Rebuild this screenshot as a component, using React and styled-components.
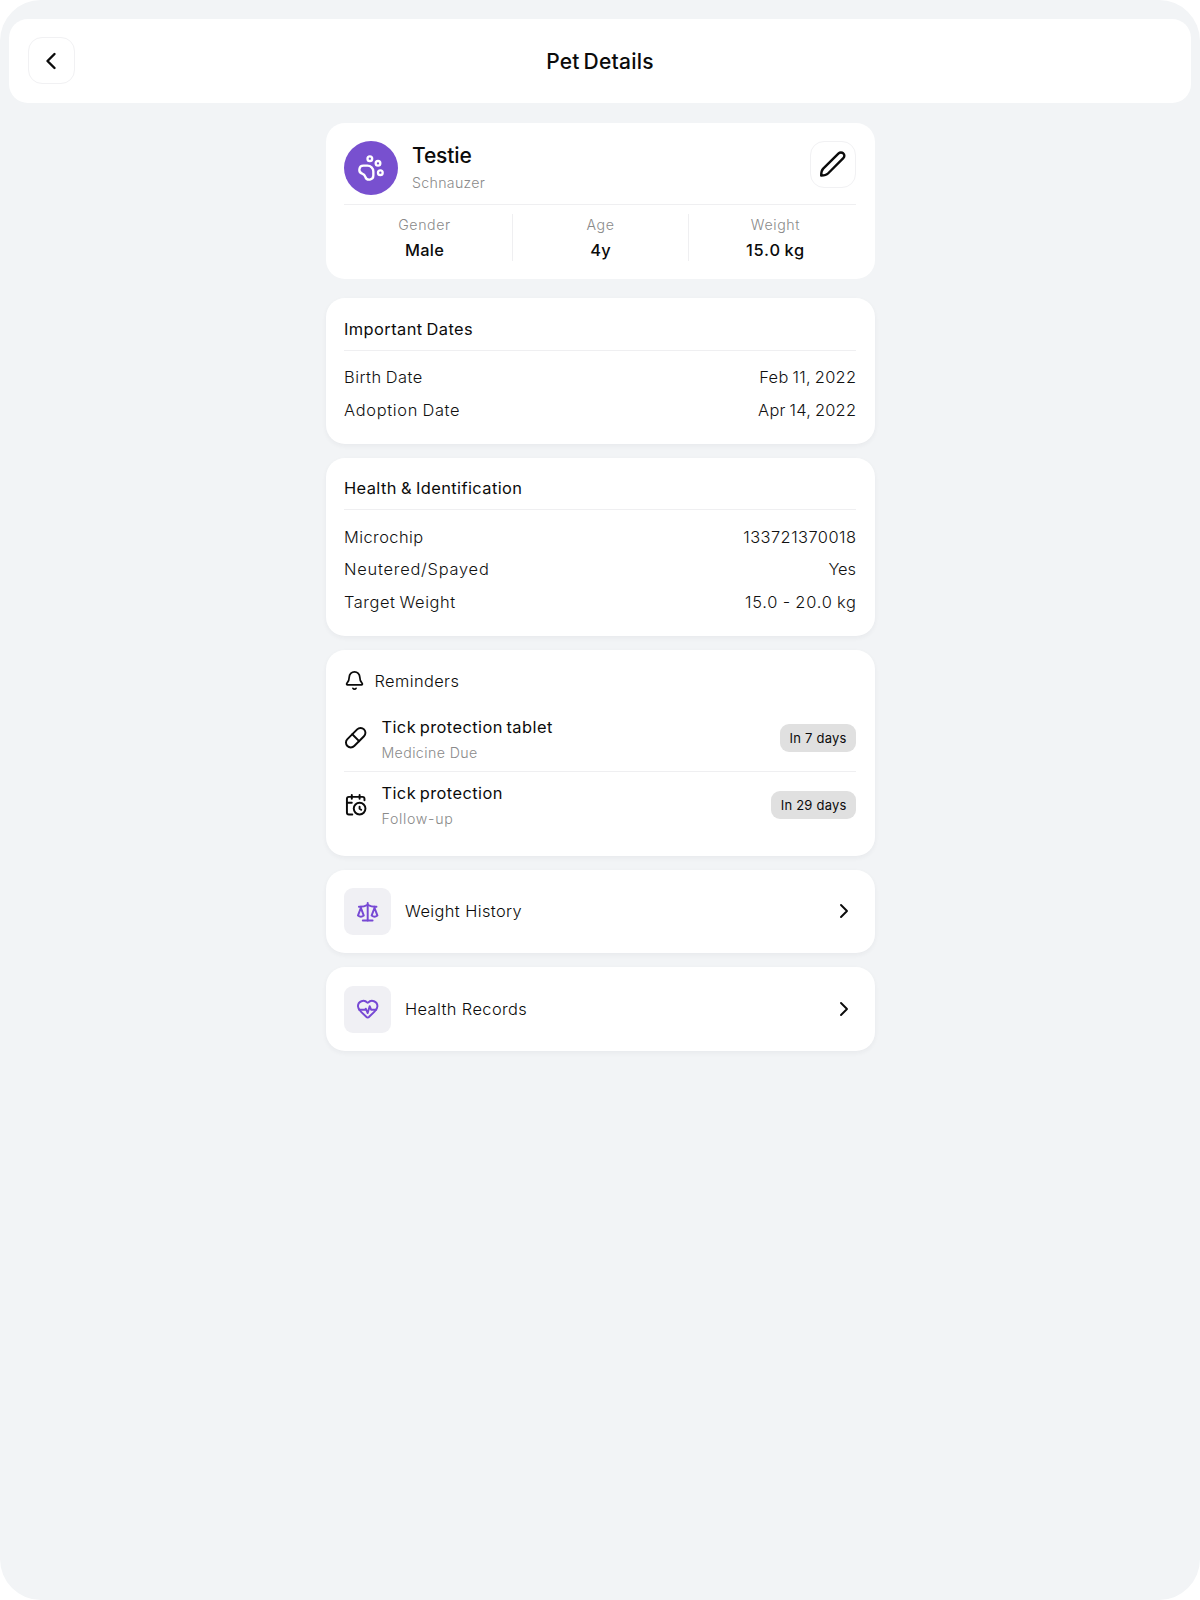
import React from 'react';
import styled, { createGlobalStyle } from 'styled-components';
import {
  Bell,
  CalendarClock,
  ChevronLeft,
  ChevronRight,
  HeartPulse,
  PawPrint,
  Pill,
  Scale
} from 'lucide-react';

// track = letter spacing in px
const stats = [
  { label: 'Gender', value: 'Male', track: 0.25 },
  { label: 'Age', value: '4y', track: 0.2 },
  { label: 'Weight', value: '15.0 kg', track: 0.8 }
];

const dates = [
  { label: 'Birth Date', track: 0.5, value: 'Feb 11, 2022', valueTrack: 0.3 },
  { label: 'Adoption Date', track: 0.7, value: 'Apr 14, 2022', valueTrack: 0.25 }
];

const health = [
  { label: 'Microchip', track: 0.45, value: '133721370018', valueTrack: 0.47 },
  { label: 'Neutered/Spayed', track: 0.78, value: 'Yes', valueTrack: 0 },
  { label: 'Target Weight', track: 0.55, value: '15.0 - 20.0 kg', valueTrack: 0.8 }
];

const reminders = [
  { icon: Pill, title: 'Tick protection tablet', type: 'Medicine Due', track: 0.4, due: 'In 7 days' },
  { icon: CalendarClock, title: 'Tick protection', type: 'Follow-up', track: 0.7, due: 'In 29 days' }
];

const links = [
  { icon: Scale, title: 'Weight History' },
  { icon: HeartPulse, title: 'Health Records' }
];

const PenIcon = () => (
  <svg width="28" height="28" viewBox="0 0 28 28" fill="none" stroke="#0b0b0b" strokeWidth="2.4" strokeLinecap="round" strokeLinejoin="round">
    <path d="M4.2 18.7 L19.6 3.4 C20.9 2.1 23 2.1 24.3 3.4 C25.7 4.7 25.7 6.9 24.3 8.2 L9 23.5 C7.2 25.3 4.8 25.5 2.2 25.6 C2.2 23.1 2.4 20.5 4.2 18.7 Z" />
  </svg>
);

const InfoCard = ({ title, rows }) => (
  <Card $shadow>
    <CardTitle>{title}</CardTitle>
    <InfoRows>
      {rows.map(row => (
        <InfoRow key={row.label}>
          <InfoText $track={row.track}>{row.label}</InfoText>
          <InfoText $track={row.valueTrack}>{row.value}</InfoText>
        </InfoRow>
      ))}
    </InfoRows>
  </Card>
);

const App = () => (
  <Page>
    <GlobalStyle />
    <Screen>
      <Header>
        <SquareButton aria-label="Back">
          <BackIcon size={28} strokeWidth={2.1} />
        </SquareButton>
        <HeaderTitle>Pet Details</HeaderTitle>
      </Header>
      <Cards>
        <Card $first>
          <Profile>
            <Avatar>
              <PawPrint size={28} />
            </Avatar>
            <ProfileText>
              <PetName>Testie</PetName>
              <Muted $track={0.3}>Schnauzer</Muted>
            </ProfileText>
            <SquareButton aria-label="Edit">
              <PenIcon />
            </SquareButton>
          </Profile>
          <Stats>
            {stats.map(s => (
              <Stat key={s.label}>
                <Muted $track={0.6}>{s.label}</Muted>
                <StatValue $track={s.track}>{s.value}</StatValue>
              </Stat>
            ))}
          </Stats>
        </Card>
        <InfoCard title="Important Dates" rows={dates} />
        <InfoCard title="Health & Identification" rows={health} />
        <Card $shadow>
          <RemindersHead>
            <Bell size={21} />
            <span>Reminders</span>
          </RemindersHead>
          <ReminderList>
            {reminders.map(({ icon: Icon, title, type, track, due }) => (
              <Reminder key={title}>
                <Icon size={23.4} />
                <ReminderText>
                  <ReminderTitle>{title}</ReminderTitle>
                  <Muted $track={track}>{type}</Muted>
                </ReminderText>
                <Badge>{due}</Badge>
              </Reminder>
            ))}
          </ReminderList>
        </Card>
        {links.map(({ icon: Icon, title }) => (
          <LinkCard key={title} $shadow>
            <Tile>
              <Icon size={23.4} />
            </Tile>
            <LinkTitle>{title}</LinkTitle>
            <ChevronRight size={24} strokeWidth={1.9} />
          </LinkCard>
        ))}
      </Cards>
    </Screen>
  </Page>
);

const GlobalStyle = createGlobalStyle`
  * {
    box-sizing: border-box;
  }

  body {
    margin: 0;
    background: #fff;
    color: #0b0b0b;
    font-family: Inter, "Liberation Sans", sans-serif;
  }

  svg {
    display: block;
    flex-shrink: 0;
  }
`;

const Page = styled.div`
  background: #fff;
`;

const Screen = styled.div`
  min-height: 1600px;
  padding: 18.5px 9.4px 0;
  background: #f2f4f6;
  border-radius: 41px;
`;

const Header = styled.header`
  display: grid;
  grid-template-columns: 46px 1fr 46px;
  align-items: center;
  height: 84px;
  padding: 0 19px;
  background: #fff;
  border-radius: 19px;
`;

const HeaderTitle = styled.h1`
  margin: 3px 0 0;
  font-size: 21px;
  font-weight: 500;
  line-height: 28px;
  text-align: center;
  letter-spacing: 0.25px;
  word-spacing: -2px;
`;

const SquareButton = styled.button`
  display: flex;
  align-items: center;
  justify-content: center;
  width: 46.5px;
  height: 46.5px;
  padding: 0;
  color: #0b0b0b;
  background: #fff;
  border: 1px solid #f1f1f3;
  border-radius: 14px;
`;

const BackIcon = styled(ChevronLeft)`
  margin-right: 1.5px;
`;

const Cards = styled.main`
  display: flex;
  flex-direction: column;
  gap: 14px;
  width: 549px;
  margin: 20.5px auto 0;
`;

const Card = styled.section`
  margin-bottom: ${props => (props.$first ? '5px' : 0)};
  padding: ${props => (props.$first ? '18px 18.5px' : '18.5px')};
  background: #fff;
  border-radius: 19px;
  box-shadow: ${props => (props.$shadow ? '0 2px 5px rgba(30, 30, 60, 0.05)' : 'none')};
`;

const Profile = styled.div`
  display: flex;
  align-items: flex-start;
  padding-bottom: 9px;
  border-bottom: 1px solid #efeff1;
`;

const Avatar = styled.div`
  display: flex;
  align-items: center;
  justify-content: center;
  width: 54px;
  height: 54px;
  color: #fff;
  background: #7850cf;
  border-radius: 50%;
`;

const ProfileText = styled.div`
  flex: 1;
  padding-left: 14px;
`;

const PetName = styled.h2`
  margin: 1px 0 1.5px;
  font-size: 21px;
  font-weight: 500;
  line-height: 28px;
  letter-spacing: -0.15px;
`;

const Muted = styled.div`
  color: #8a8a8a;
  font-size: 14.2px;
  font-weight: 300;
  line-height: 22px;
  letter-spacing: ${props => props.$track}px;
`;

const Stats = styled.div`
  display: grid;
  grid-template-columns: 168px 1fr 168px;
  padding-top: 9px;
`;

const Stat = styled.div`
  height: 47px;
  text-align: center;

  & + & {
    border-left: 1px solid #efeff1;
  }
  &:first-child {
    padding-right: 7px;
  }
  &:last-child {
    padding-left: 6px;
  }
`;

const StatValue = styled.div`
  margin-top: 1px;
  font-size: 16.4px;
  font-weight: 500;
  line-height: 26px;
  letter-spacing: ${props => props.$track}px;
  word-spacing: -1.5px;
`;

const CardTitle = styled.h3`
  margin: 0;
  padding-bottom: 8px;
  border-bottom: 1px solid #efeff1;
  font-size: 16.4px;
  font-weight: 400;
  line-height: 25px;
  letter-spacing: 0.42px;
  word-spacing: -1px;
`;

const InfoRows = styled.div`
  padding-top: 10.5px;
  margin-bottom: -1.2px;
`;

const InfoRow = styled.div`
  display: flex;
  justify-content: space-between;
  font-size: 16.4px;
  font-weight: 300;
  line-height: 32.6px;
  color: #111;
  word-spacing: -1px;
`;

const InfoText = styled.span`
  letter-spacing: ${props => props.$track}px;

  &:last-child {
    margin-right: -${props => props.$track}px;
  }
`;

const RemindersHead = styled.div`
  display: flex;
  align-items: center;
  gap: 9.5px;
  height: 25px;
  font-size: 16.4px;
  font-weight: 300;
  letter-spacing: 0.4px;
`;

const ReminderList = styled.div`
  padding-top: 12px;
`;

const Reminder = styled.div`
  display: flex;
  align-items: center;
  height: 66px;

  & + & {
    border-top: 1px solid #efeff1;
  }
`;

const ReminderText = styled.div`
  flex: 1;
  padding: 1.4px 0 0 14px;
`;

const ReminderTitle = styled.div`
  margin-bottom: 2px;
  font-size: 16.4px;
  font-weight: 400;
  line-height: 26px;
  letter-spacing: 0.45px;
  word-spacing: -1.5px;
`;

const Badge = styled.div`
  padding: 0 9.4px;
  font-size: 13px;
  line-height: 28px;
  letter-spacing: 0.22px;
  background: #e0e0e0;
  border-radius: 9px;
`;

const LinkCard = styled(Card)`
  display: flex;
  align-items: center;
  height: 83.7px;
`;

const Tile = styled.div`
  display: flex;
  align-items: center;
  justify-content: center;
  width: 47px;
  height: 47px;
  color: #7749d4;
  background: #f0f0f4;
  border-radius: 9px;
`;

const LinkTitle = styled.div`
  flex: 1;
  padding-left: 14px;
  font-size: 16.4px;
  font-weight: 300;
  letter-spacing: 0.4px;
`;

export default App;
